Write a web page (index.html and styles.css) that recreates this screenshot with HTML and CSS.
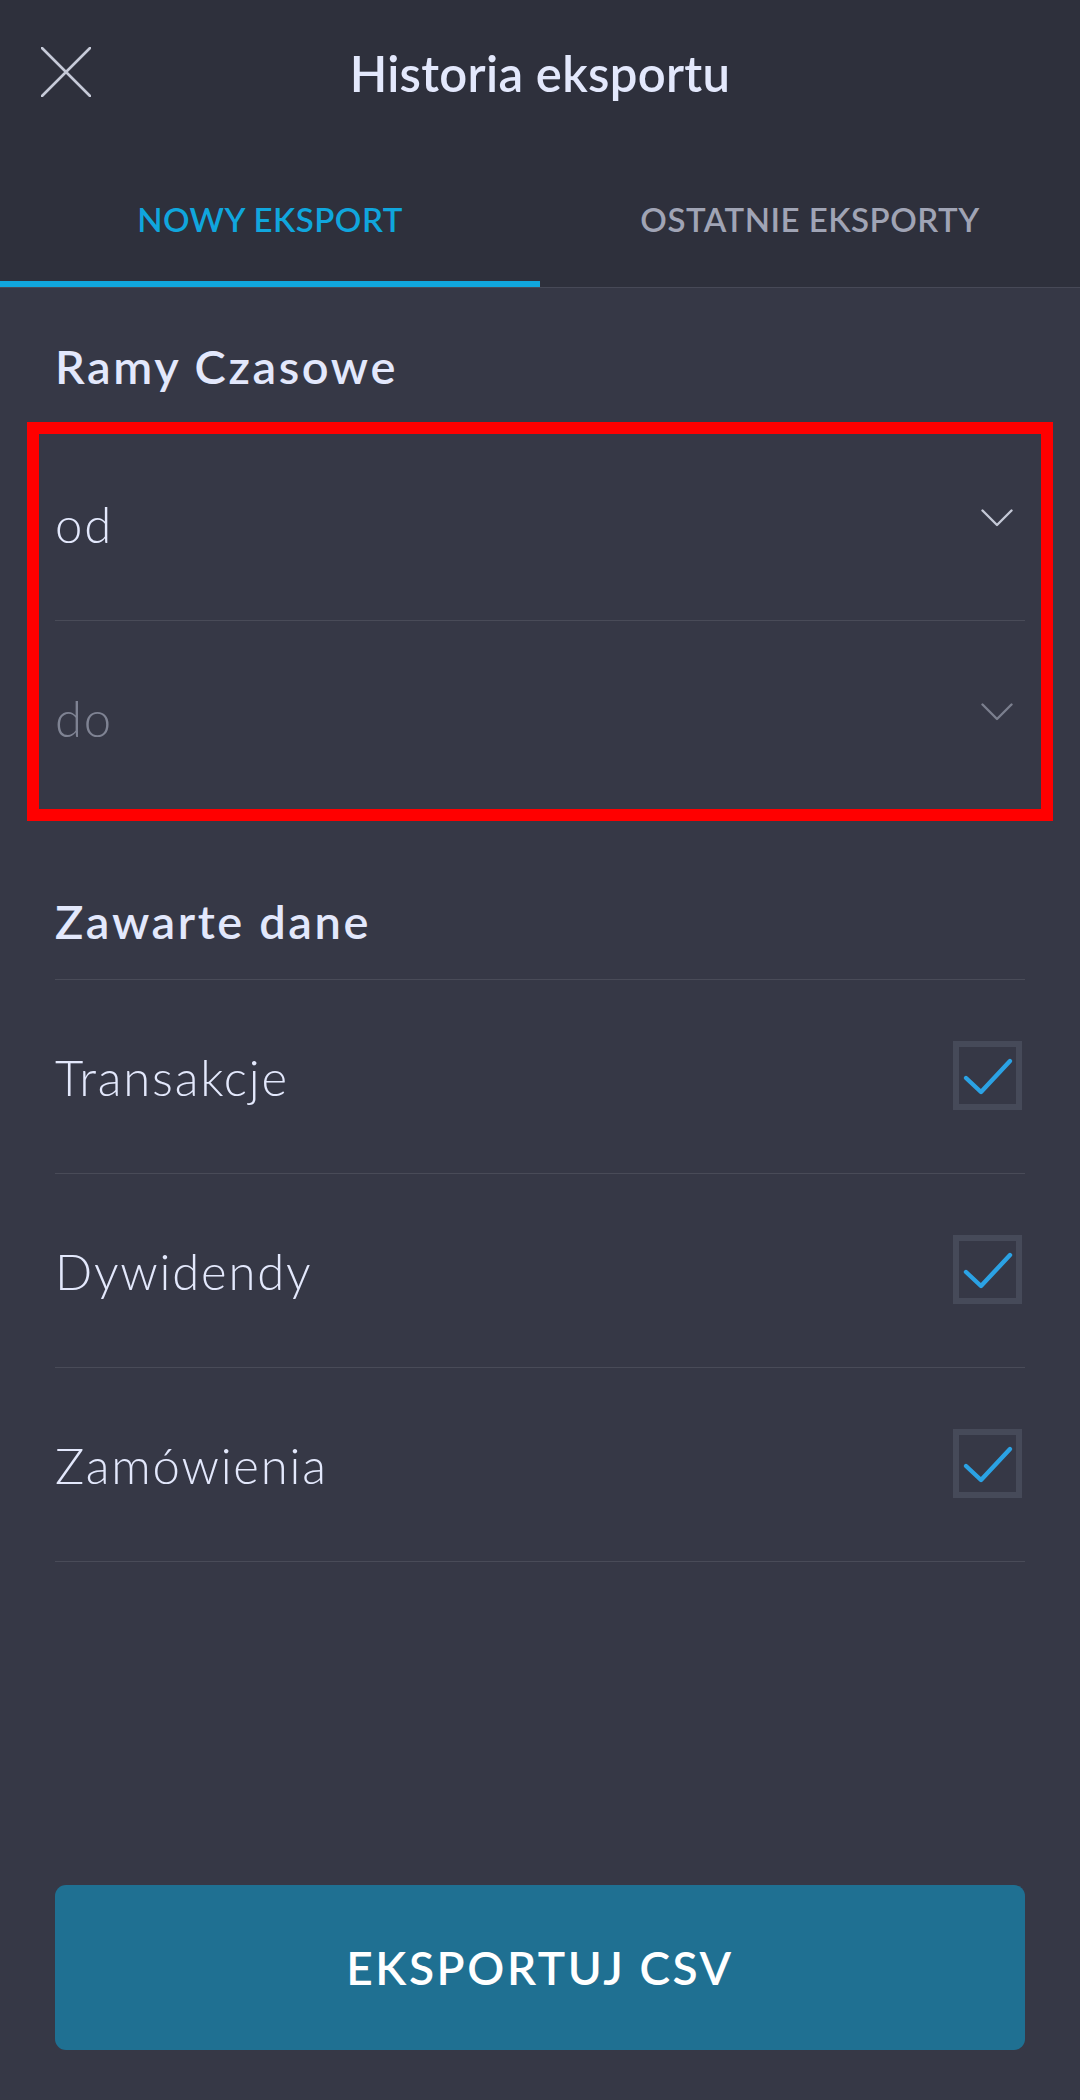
FILE: index.html
```html
<!DOCTYPE html>
<html lang="pl">
<head>
<meta charset="utf-8">
<title>Historia eksportu</title>
<link rel="stylesheet" href="styles.css">
</head>
<body>
<div class="screen">
  <header class="header">
    <div class="topbar">
      <button class="close" aria-label="Zamknij">
        <svg width="50" height="50" viewBox="0 0 50 50"><path d="M1 1 L49 49 M49 1 L1 49" stroke="#c6cad8" stroke-width="2.6" stroke-linecap="round" fill="none"/></svg>
      </button>
      <h1 class="title">Historia eksportu</h1>
      <span></span>
    </div>
    <nav class="tabs">
      <div class="tab tab-active">NOWY EKSPORT</div>
      <div class="tab">OSTATNIE EKSPORTY</div>
    </nav>
  </header>

  <main class="content">
    <h2 class="section-title">Ramy Czasowe</h2>
    <div class="date-group">
      <div class="row">
        <span class="row-label">od</span>
        <svg class="chev" width="32" height="18" viewBox="0 0 32 18"><path d="M1.5 1.5 L16 16 L30.5 1.5" stroke="#c4c8d6" stroke-width="2.4" stroke-linecap="round" stroke-linejoin="round" fill="none"/></svg>
      </div>
      <div class="row">
        <span class="row-label placeholder">do</span>
        <svg class="chev" width="32" height="18" viewBox="0 0 32 18"><path d="M1.5 1.5 L16 16 L30.5 1.5" stroke="#7b7f8e" stroke-width="2.4" stroke-linecap="round" stroke-linejoin="round" fill="none"/></svg>
      </div>
      <div class="highlight"></div>
    </div>

    <h2 class="section-title second">Zawarte dane</h2>
    <div class="check-list">
      <div class="row">
        <span class="row-label">Transakcje</span>
        <span class="checkbox"><svg width="57" height="57" viewBox="0 0 57 57"><path d="M7 31 L22 45 L51 14" stroke="#2ba2e4" stroke-width="4.4" stroke-linecap="round" stroke-linejoin="round" fill="none"/></svg></span>
      </div>
      <div class="row">
        <span class="row-label">Dywidendy</span>
        <span class="checkbox"><svg width="57" height="57" viewBox="0 0 57 57"><path d="M7 31 L22 45 L51 14" stroke="#2ba2e4" stroke-width="4.4" stroke-linecap="round" stroke-linejoin="round" fill="none"/></svg></span>
      </div>
      <div class="row">
        <span class="row-label">Zamówienia</span>
        <span class="checkbox"><svg width="57" height="57" viewBox="0 0 57 57"><path d="M7 31 L22 45 L51 14" stroke="#2ba2e4" stroke-width="4.4" stroke-linecap="round" stroke-linejoin="round" fill="none"/></svg></span>
      </div>
    </div>

    <button class="export-btn">EKSPORTUJ CSV</button>
  </main>
</div>
</body>
</html>
```

FILE: styles.css
```css
* { box-sizing: border-box; }

html, body {
  margin: 0;
  padding: 0;
  background: #363846;
}

body {
  font-family: Lato, "Noto Sans", "Liberation Sans", sans-serif;
  color: #e3e8fc;
}

.screen {
  width: 1080px;
  height: 2100px;
  display: flex;
  flex-direction: column;
}

.header {
  background: #2e303c;
  border-bottom: 1px solid #474957;
}

.topbar {
  height: 146px;
  display: grid;
  grid-template-columns: 1fr auto 1fr;
  align-items: center;
}

.close {
  justify-self: start;
  margin-left: 41px;
  margin-top: -2px;
  padding: 0;
  border: 0;
  background: none;
  width: 50px;
  height: 50px;
  display: flex;
}

.title {
  margin: 0;
  font-size: 49px;
  font-weight: 600;
  line-height: 1.2;
  color: #e3e8fc;
  letter-spacing: 0.3px;
}

.tabs {
  display: flex;
  height: 141px;
}

.tab {
  flex: 1;
  display: flex;
  align-items: center;
  justify-content: center;
  padding-top: 11px;
  border-bottom: 6px solid transparent;
  font-size: 33px;
  font-weight: 600;
  color: #a0a4b5;
  letter-spacing: 0.5px;
}

.tab-active {
  color: #10a6dd;
  border-bottom-color: #10a6dd;
}

.content {
  flex: 1;
  display: flex;
  flex-direction: column;
  padding: 50px 55px 50px;
}

.section-title {
  margin: 0;
  font-size: 47px;
  font-weight: 600;
  line-height: 56px;
  color: #e3e8fc;
  letter-spacing: 2.6px;
}

.section-title.second {
  margin-top: 78px;
}

.date-group {
  position: relative;
  margin-top: 33px;
}

.row {
  height: 194px;
  display: flex;
  align-items: center;
  justify-content: space-between;
  border-bottom: 1px solid #494b58;
}

.row-label {
  font-size: 49px;
  font-weight: 300;
  color: #e3e8fc;
  letter-spacing: 1.8px;
}

.placeholder {
  color: #7f8393;
}

.chev {
  margin-right: 12px;
  margin-top: -12px;
}

.highlight {
  position: absolute;
  left: -28px;
  right: -28px;
  top: -5px;
  bottom: -6px;
  border: 12px solid #ff0000;
  pointer-events: none;
}

.check-list {
  margin-top: 30px;
  border-top: 1px solid #494b58;
}

.checkbox {
  width: 69px;
  height: 69px;
  border: 6px solid #464a59;
  margin-right: 3px;
  margin-bottom: 3px;
  display: flex;
}

.export-btn {
  margin-top: auto;
  height: 165px;
  width: 100%;
  border: 0;
  border-radius: 11px;
  background: #1f7092;
  color: #ffffff;
  font-family: Lato, "Noto Sans", "Liberation Sans", sans-serif;
  font-size: 46px;
  font-weight: 600;
  letter-spacing: 2.6px;
}
```
